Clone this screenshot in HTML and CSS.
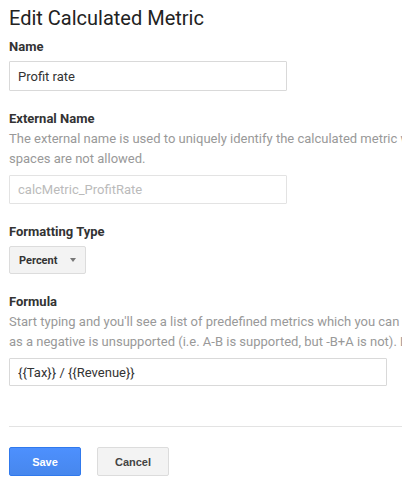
FILE: index.html
```html
<!DOCTYPE html>
<html lang="en">
<head>
    <meta charset="UTF-8">
    <meta name="viewport" content="width=device-width, initial-scale=1.0">
    <title>Edit Calculated Metric</title>
    <link rel="stylesheet" href="styles.css">
</head>
<body>
    <div class="page">
        <h1>Edit Calculated Metric</h1>

        <div class="field first">
            <label for="name">Name</label>
            <input type="text" id="name" class="text-input short" value="Profit rate">
        </div>

        <div class="field">
            <label for="external">External Name</label>
            <p class="help">The external name is used to uniquely identify the calculated metric when accessed through the API. Only alphanumeric characters and underscores are allowed;<br>spaces are not allowed.</p>
            <input type="text" id="external" class="text-input short" value="calcMetric_ProfitRate" disabled>
        </div>

        <div class="field">
            <label>Formatting Type</label>
            <div class="dropdown">
                <span>Percent</span>
                <span class="caret"></span>
            </div>
        </div>

        <div class="field">
            <label for="formula">Formula</label>
            <p class="help">Start typing and you'll see a list of predefined metrics which you can choose from. Using a single metric<br>as a negative is unsupported (i.e. A-B is supported, but -B+A is not). Learn more about formulas.</p>
            <input type="text" id="formula" class="text-input long" value="{{Tax}} / {{Revenue}}">
        </div>

        <hr class="divider">

        <div class="actions">
            <button class="btn primary">Save</button>
            <button class="btn">Cancel</button>
        </div>
    </div>
</body>
</html>
```

FILE: styles.css
```css
html, body {
    overflow: hidden;
}

body {
    margin: 0;
    font-family: Roboto, 'Liberation Sans', Arial, sans-serif;
    color: #333;
    background: #fff;
}

.page {
    padding: 6px 0 0 9px;
    width: 900px;
}

h1 {
    margin: 0;
    font-size: 20px;
    line-height: 24px;
    font-weight: 400;
    color: #222;
}

.field {
    margin-top: 20px;
}

.field.first {
    margin-top: 9px;
}

label {
    display: block;
    font-size: 13px;
    line-height: 16px;
    font-weight: 700;
    color: #333;
    margin-bottom: 6px;
}

.help {
    margin: -4px 0 6px;
    font-size: 13px;
    line-height: 20px;
    color: #999;
    white-space: nowrap;
}

.text-input {
    display: block;
    box-sizing: border-box;
    height: 30px;
    margin: 0;
    padding: 0 8px;
    border: 1px solid #d9d9d9;
    border-radius: 1px;
    font-family: Roboto, 'Liberation Sans', Arial, sans-serif;
    font-size: 13px;
    color: #333;
    background: #fff;
    outline: none;
}

.text-input.short {
    width: 278px;
}

.text-input.long {
    width: 378px;
    height: 28px;
}

.text-input:disabled {
    height: 29px;
    border-color: #e3e3e3;
    color: #bbb;
}

.dropdown {
    box-sizing: border-box;
    display: inline-flex;
    align-items: center;
    width: 77px;
    height: 28px;
    padding: 0 0 0 9px;
    border: 1px solid #dcdcdc;
    border-radius: 2px;
    background: #f3f3f3;
    font-size: 11px;
    font-weight: 700;
    color: #333;
}

.caret {
    margin-left: 13px;
    width: 0;
    height: 0;
    border-left: 3.5px solid transparent;
    border-right: 3.5px solid transparent;
    border-top: 4px solid #777;
}

.divider {
    margin: 40px 0 0;
    border: none;
    border-top: 1px solid #e3e3e3;
}

.actions {
    display: flex;
    gap: 16px;
    margin-top: 20px;
}

.btn {
    box-sizing: border-box;
    width: 72px;
    height: 29px;
    border: 1px solid #dcdcdc;
    border-radius: 2px;
    background: #f3f3f3;
    font-family: 'Liberation Sans', Arial, sans-serif;
    font-size: 11px;
    font-weight: 700;
    color: #444;
    cursor: pointer;
}

.btn.primary {
    border-color: #3079ed;
    background: linear-gradient(#4d90fe, #4787ed);
    color: #fff;
}
```
